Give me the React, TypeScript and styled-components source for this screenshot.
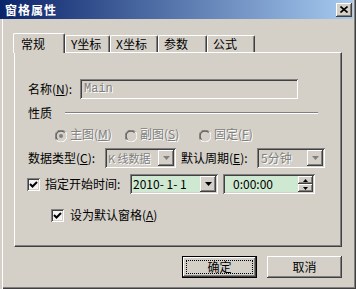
import styled, { createGlobalStyle } from "styled-components";

const GlobalStyle = createGlobalStyle`
  html, body {
    margin: 0;
    padding: 0;
    background: #d4d0c8;
  }
  body {
    font-family: "Noto Sans CJK SC", "DejaVu Sans", sans-serif;
    font-size: 12px;
    color: #000;
  }
`;

const raised = `
  background: #d4d0c8;
  box-shadow: inset -1px -1px #404040, inset 1px 1px #ffffff, inset -2px -2px #808080, inset 2px 2px #d4d0c8;
`;

const sunken = `
  box-shadow: inset 1px 1px #808080, inset -1px -1px #ffffff, inset 2px 2px #404040, inset -2px -2px #d4d0c8;
`;

const Window = styled.div`
  width: 356px;
  height: 289px;
  box-sizing: border-box;
  background: #d4d0c8;
  display: flex;
  flex-direction: column;
  box-shadow: inset 2px 0 #d4d0c8, inset 3px 0 #ffffff, inset -1px -1px #404040, inset -2px -2px #808080;
`;

const TitleBar = styled.div`
  height: 19px;
  margin-right: 3px;
  display: flex;
  align-items: center;
  justify-content: space-between;
  padding: 0 1px 0 5px;
  background: linear-gradient(to right, #0a246a, #a6caf0);
`;

const Title = styled.span`
  color: #fff;
  font-weight: bold;
  font-size: 12px;
  letter-spacing: 1px;
  line-height: 14px;
`;

const CloseButton = styled.div`
  width: 16px;
  height: 14px;
  display: flex;
  align-items: center;
  justify-content: center;
  ${raised}
`;

const Body = styled.div`
  padding: 14px 14px 0 14px;
  display: flex;
  flex-direction: column;
`;

const TabStrip = styled.div`
  display: flex;
  align-items: flex-end;
  height: 19px;
  margin-left: -1px;
  position: relative;
  z-index: 1;
`;

const Tab = styled.div<{ $w: number; $active?: boolean }>`
  width: ${(p) => p.$w}px;
  height: ${(p) => (p.$active ? 20 : 17)}px;
  margin-bottom: ${(p) => (p.$active ? -1 : 0)}px;
  box-sizing: border-box;
  background: #d4d0c8;
  border-left: 1px solid #ffffff;
  border-top: 1px solid #ffffff;
  border-right: 1px solid #404040;
  box-shadow: inset -1px 0 #808080;
  border-radius: 2px 2px 0 0;
  display: flex;
  align-items: ${(p) => (p.$active ? "flex-start" : "center")};
  padding-top: ${(p) => (p.$active ? 3 : 0)}px;
  padding-left: ${(p) => (p.$active ? 7 : 5)}px;
  font-size: 12px;
  line-height: 14px;
`;

const Panel = styled.div`
  height: 195px;
  box-sizing: border-box;
  border-top: 1px solid #ffffff;
  border-left: 1px solid #ffffff;
  border-right: 1px solid #404040;
  border-bottom: 1px solid #404040;
  box-shadow: inset -1px -1px #808080;
  display: flex;
  flex-direction: column;
  padding-top: 26px;
`;

const Row = styled.div<{ $top: number; $indent: number; $h?: number }>`
  display: flex;
  align-items: center;
  margin-top: ${(p) => p.$top}px;
  padding-left: ${(p) => p.$indent}px;
  height: ${(p) => p.$h ?? 20}px;
`;

const Label = styled.span<{ $w?: number; $disabled?: boolean }>`
  ${(p) => (p.$w ? `width: ${p.$w}px;` : "")}
  flex-shrink: 0;
  white-space: nowrap;
  line-height: 14px;
  color: ${(p) => (p.$disabled ? "#808080" : "#000")};
  text-shadow: ${(p) => (p.$disabled ? "1px 1px 0 #ffffff" : "none")};
  u {
    text-decoration: underline;
  }
`;

const TextBox = styled.div<{ $w: number; $bg?: string }>`
  width: ${(p) => p.$w}px;
  height: 20px;
  box-sizing: border-box;
  background: ${(p) => p.$bg ?? "#d4d0c8"};
  ${sunken}
  display: flex;
  align-items: center;
  padding: 2px;
`;

const FieldText = styled.span<{ $mono?: boolean; $disabled?: boolean; $pad?: number; $size?: number }>`
  flex: 1;
  min-width: 0;
  padding-left: ${(p) => p.$pad ?? 2}px;
  font-family: ${(p) =>
    p.$mono ? `"Liberation Mono", monospace` : `"Noto Sans CJK SC", "DejaVu Sans", sans-serif`};
  font-size: ${(p) => p.$size ?? 12}px;
  line-height: 14px;
  white-space: nowrap;
  color: ${(p) => (p.$disabled ? "#808080" : "#000")};
  text-shadow: ${(p) => (p.$disabled ? "1px 1px 0 #ffffff" : "none")};
`;

const DropButton = styled.div`
  width: 16px;
  height: 16px;
  flex-shrink: 0;
  display: flex;
  align-items: center;
  justify-content: center;
  ${raised}
`;

const SpinColumn = styled.div`
  display: flex;
  flex-direction: column;
  width: 15px;
  height: 16px;
  flex-shrink: 0;
`;

const SpinButton = styled.div`
  flex: 1;
  display: flex;
  align-items: center;
  justify-content: center;
  ${raised}
`;

const Separator = styled.div<{ $w: number }>`
  width: ${(p) => p.$w}px;
  height: 0;
  border-top: 1px solid #808080;
  border-bottom: 1px solid #ffffff;
`;

const RadioItem = styled.div<{ $w?: number }>`
  display: flex;
  align-items: center;
  gap: 3px;
  ${(p) => (p.$w ? `width: ${p.$w}px;` : "")}
`;

const RadioCircle = styled.div`
  width: 12px;
  height: 12px;
  flex-shrink: 0;
`;

const CheckBox = styled.div`
  width: 13px;
  height: 13px;
  box-sizing: border-box;
  flex-shrink: 0;
  background: #f4f4f4;
  ${sunken}
  display: flex;
  align-items: center;
  justify-content: center;
`;

const ButtonRow = styled.div`
  display: flex;
  justify-content: flex-end;
  gap: 10px;
  padding-top: 9px;
`;

const Button = styled.div<{ $default?: boolean }>`
  width: 75px;
  height: 22px;
  box-sizing: border-box;
  display: flex;
  align-items: center;
  justify-content: center;
  position: relative;
  ${(p) =>
    p.$default
      ? `border: 1px solid #000; background: #d4d0c8; box-shadow: inset -1px -1px #404040, inset 1px 1px #ffffff, inset -2px -2px #808080;`
      : raised}
`;

const FocusRing = styled.div`
  position: absolute;
  inset: 3px;
  border: 1px dotted #000;
`;

const ButtonText = styled.span`
  font-size: 12px;
  line-height: 14px;
`;

const Arrow = ({ color = "#000" }: { color?: string }) => (
  <svg width="7" height="4" viewBox="0 0 7 4">
    <path d="M0 0H7L3.5 4Z" fill={color} />
  </svg>
);

const SmallArrow = ({ up }: { up?: boolean }) => (
  <svg width="5" height="3" viewBox="0 0 5 3">
    <path d={up ? "M2.5 0L5 3H0Z" : "M0 0H5L2.5 3Z"} fill="#000" />
  </svg>
);

const Check = () => (
  <svg width="9" height="9" viewBox="0 0 9 9">
    <path d="M1 4L3.5 6.5L8 2" stroke="#000" strokeWidth="2" fill="none" />
  </svg>
);

const Radio = ({ checked }: { checked?: boolean }) => (
  <RadioCircle>
    <svg width="12" height="12" viewBox="0 0 12 12">
      <path d="M10.5 2A6 6 0 0 0 1.5 10" stroke="#808080" strokeWidth="1" fill="none" />
      <circle cx="6" cy="6" r="4.5" fill="#d4d0c8" stroke="none" />
      <path d="M1.5 10A6 6 0 0 0 10.5 2" stroke="#ffffff" strokeWidth="1" fill="none" />
      <path d="M9.5 2.5A4.8 4.8 0 0 0 2.5 9.5" stroke="#404040" strokeWidth="1" fill="none" />
      {checked && <circle cx="6" cy="6" r="2" fill="#808080" />}
    </svg>
  </RadioCircle>
);

const tabs = [
  { name: "常规", w: 52 },
  { name: "Y坐标", w: 45 },
  { name: "X坐标", w: 48 },
  { name: "参数", w: 49 },
  { name: "公式", w: 48 },
];

export default function App() {
  return (
    <>
      <GlobalStyle />
      <Window>
        <TitleBar>
          <Title>窗格属性</Title>
          <CloseButton>
            <svg width="8" height="7" viewBox="0 0 8 7">
              <path d="M0.5 0.5L7.5 6.5M7.5 0.5L0.5 6.5" stroke="#000" strokeWidth="1.6" />
            </svg>
          </CloseButton>
        </TitleBar>
        <Body>
          <TabStrip>
            {tabs.map((t, i) => (
              <Tab key={t.name} $w={t.w} $active={i === 0}>
                {t.name}
              </Tab>
            ))}
          </TabStrip>
          <Panel>
            <Row $top={0} $indent={13}>
              <Label $w={52}>
                名称(<u>N</u>):
              </Label>
              <TextBox $w={218}>
                <FieldText $mono $disabled>
                  Main
                </FieldText>
              </TextBox>
            </Row>
            <Row $top={7} $indent={13} $h={14}>
              <Label $w={37}>性质</Label>
              <Separator $w={253} />
            </Row>
            <Row $top={7} $indent={40} $h={14}>
              <RadioItem $w={70}>
                <Radio checked />
                <Label $disabled>
                  主图(<u>M</u>)
                </Label>
              </RadioItem>
              <RadioItem $w={74}>
                <Radio />
                <Label $disabled>
                  副图(<u>S</u>)
                </Label>
              </RadioItem>
              <RadioItem>
                <Radio />
                <Label $disabled>
                  固定(<u>F</u>)
                </Label>
              </RadioItem>
            </Row>
            <Row $top={7} $indent={13}>
              <Label $w={77}>
                数据类型(<u>C</u>):
              </Label>
              <TextBox $w={71}>
                <FieldText $disabled $pad={1} $size={11}>
                  K 线数据
                </FieldText>
                <DropButton>
                  <Arrow color="#808080" />
                </DropButton>
              </TextBox>
              <Label $w={76} style={{ marginLeft: 5 }}>
                默认周期(<u>E</u>):
              </Label>
              <TextBox $w={68}>
                <FieldText $disabled>5分钟</FieldText>
                <DropButton>
                  <Arrow color="#808080" />
                </DropButton>
              </TextBox>
            </Row>
            <Row $top={6} $indent={12}>
              <CheckBox>
                <Check />
              </CheckBox>
              <Label $w={85} style={{ marginLeft: 5 }}>
                指定开始时间:
              </Label>
              <TextBox $w={88} $bg="#cfe8d1">
                <FieldText $pad={1}>2010- 1- 1</FieldText>
                <DropButton>
                  <Arrow />
                </DropButton>
              </TextBox>
              <TextBox $w={92} $bg="#cfe8d1" style={{ marginLeft: 5 }}>
                <FieldText $pad={8}>0:00:00</FieldText>
                <SpinColumn>
                  <SpinButton>
                    <SmallArrow up />
                  </SpinButton>
                  <SpinButton>
                    <SmallArrow />
                  </SpinButton>
                </SpinColumn>
              </TextBox>
            </Row>
            <Row $top={14} $indent={36} $h={14}>
              <CheckBox>
                <Check />
              </CheckBox>
              <Label style={{ marginLeft: 6 }}>
                设为默认窗格(<u>A</u>)
              </Label>
            </Row>
          </Panel>
          <ButtonRow>
            <Button $default>
              <FocusRing />
              <ButtonText>确定</ButtonText>
            </Button>
            <Button>
              <ButtonText>取消</ButtonText>
            </Button>
          </ButtonRow>
        </Body>
      </Window>
    </>
  );
}
